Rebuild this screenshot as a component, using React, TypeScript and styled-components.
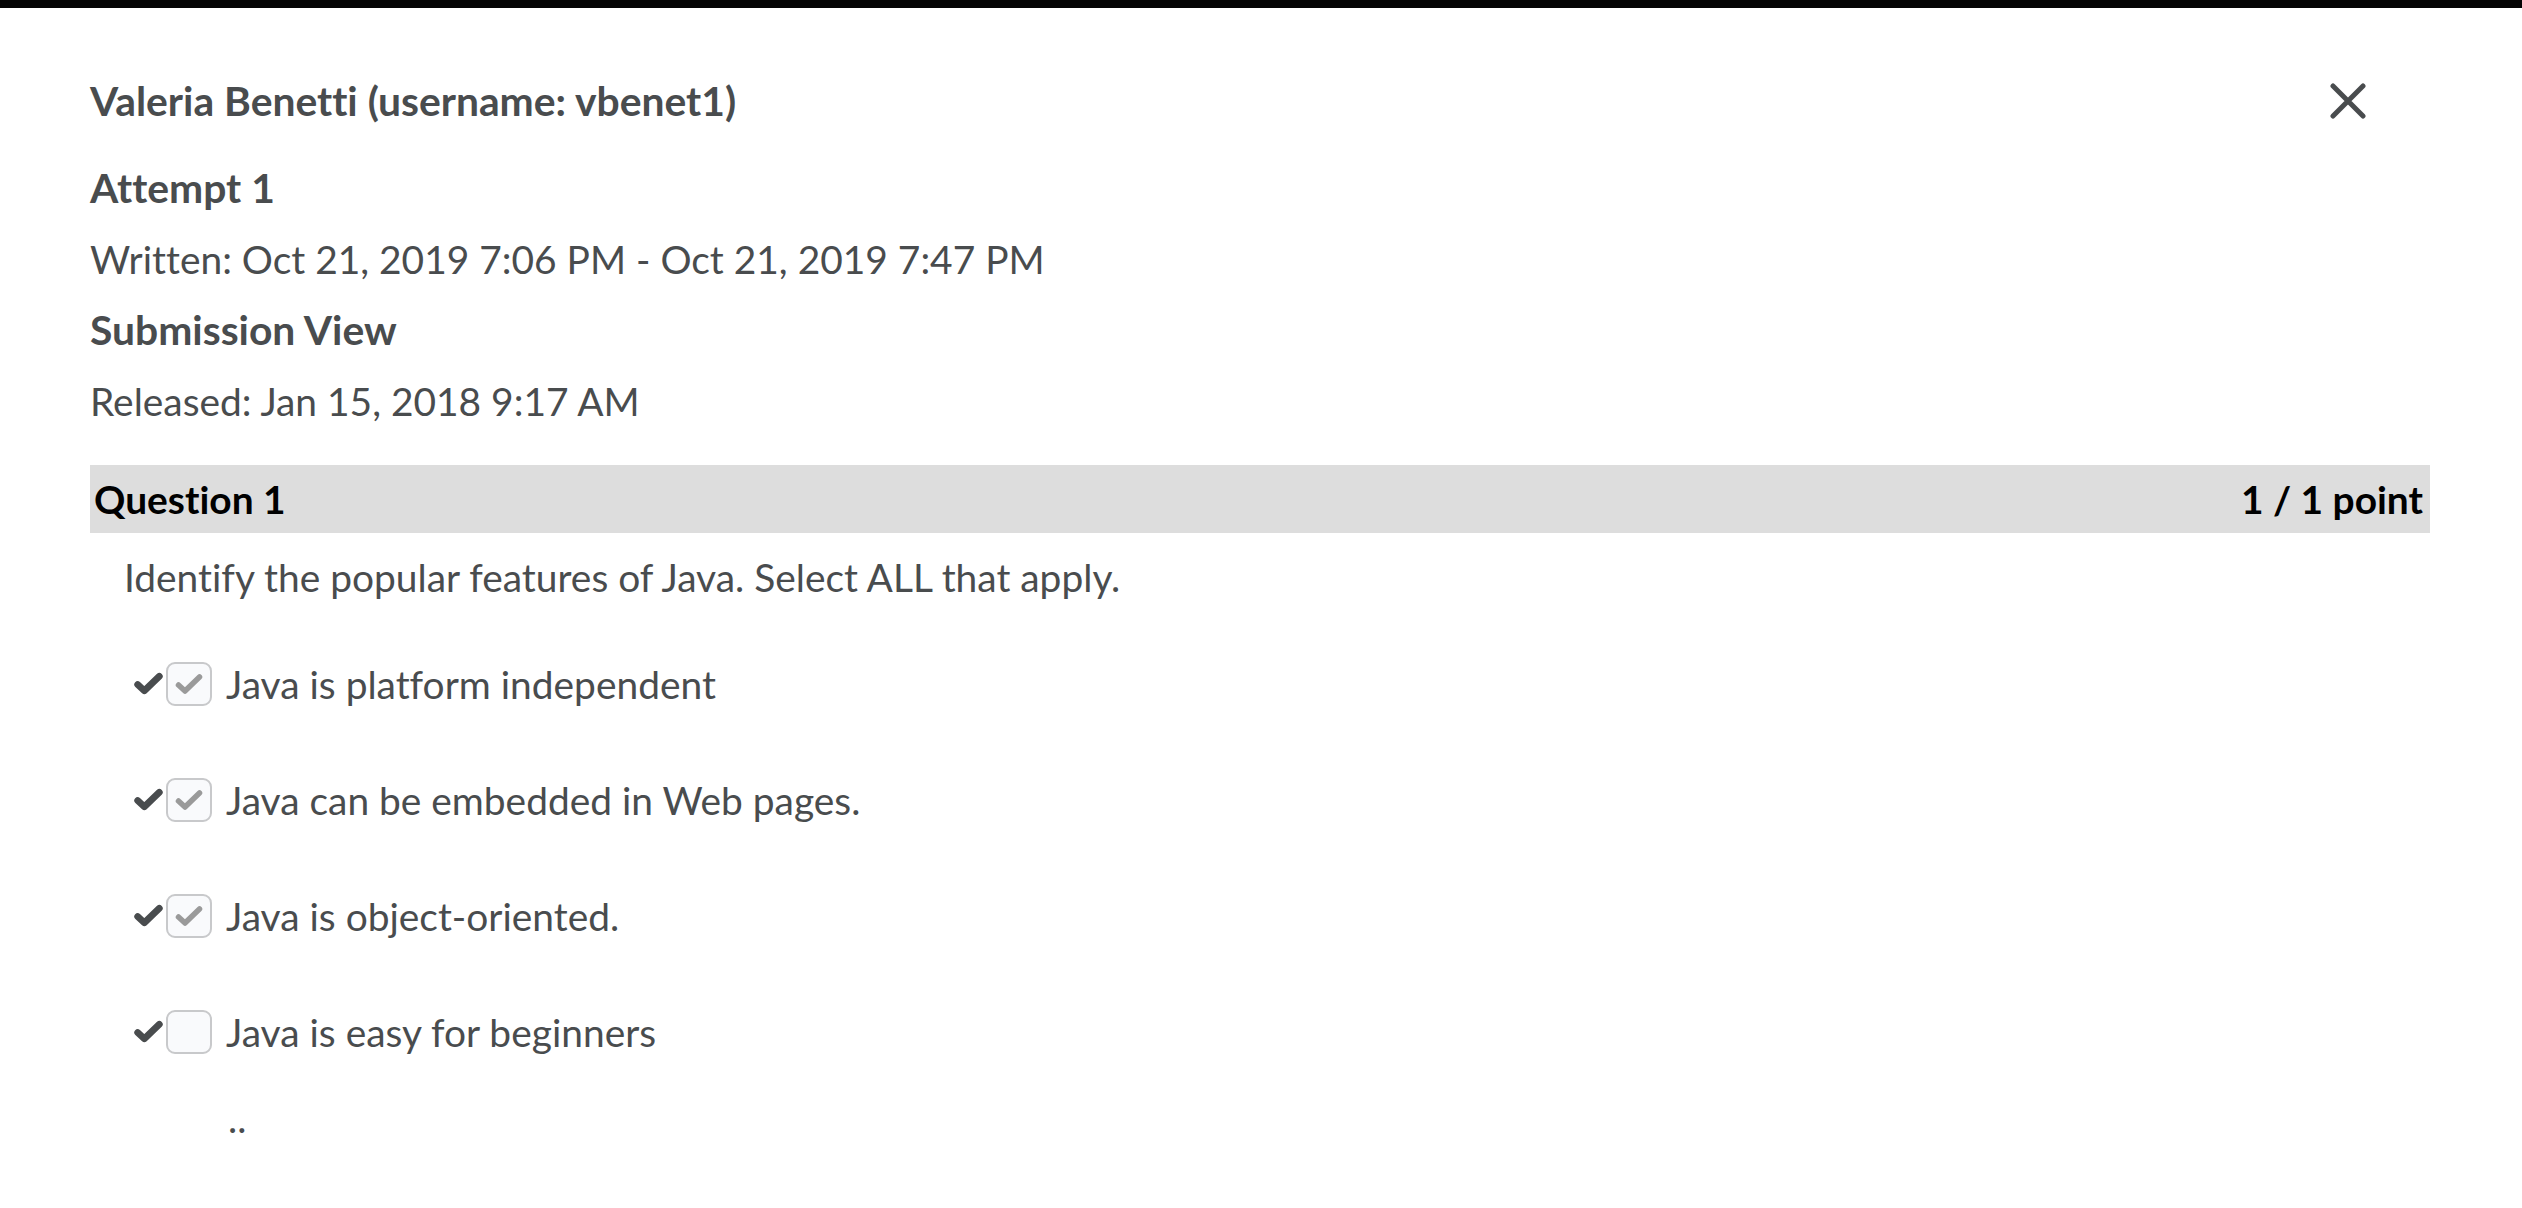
import React from "react";
import styled, { createGlobalStyle } from "styled-components";

const GlobalStyle = createGlobalStyle`
  html, body {
    margin: 0;
    padding: 0;
    background: #ffffff;
  }
  body {
    font-family: Lato, "Open Sans", "Liberation Sans", sans-serif;
    font-variant-ligatures: none;
    font-feature-settings: "liga" 0, "clig" 0;
    color: #494c4e;
  }
`;

const TopBar = styled.div`
  height: 8px;
  background: #050505;
`;

const Dialog = styled.div`
  padding: 65px 92px 40px 90px;
`;

const HeaderRow = styled.div`
  display: flex;
  align-items: center;
  justify-content: space-between;
`;

const Title = styled.h1`
  margin: 0;
  font-size: 40.8px;
  line-height: 56px;
  font-weight: 700;
  color: #494c4e;
`;

const CloseButton = styled.button`
  width: 40px;
  height: 40px;
  margin-right: 62px;
  padding: 0;
  border: none;
  background: transparent;
  display: flex;
  align-items: center;
  justify-content: center;
  color: #494c4e;
  cursor: pointer;
`;

const Heading = styled.h2<{ $gap: number }>`
  margin: ${(p) => p.$gap}px 0 0;
  font-size: 40.8px;
  line-height: 56px;
  font-weight: 700;
  color: #494c4e;
`;

const Meta = styled.div`
  margin-top: 15px;
  font-size: 38.9px;
  line-height: 56px;
  font-weight: 400;
`;

const QuestionBar = styled.div`
  margin-top: 36px;
  height: 68px;
  background: #dddddd;
  display: flex;
  align-items: center;
  justify-content: space-between;
  padding: 0 7px 0 4px;
  color: #000000;
  font-size: 38.9px;
  font-weight: 700;
`;

const Prompt = styled.div`
  margin: 16px 0 0 34px;
  font-size: 38.9px;
  line-height: 56px;
`;

const OptionList = styled.div`
  margin-top: 51px;
  padding-left: 43px;
  display: flex;
  flex-direction: column;
  gap: 60px;
`;

const OptionRow = styled.div`
  display: flex;
  align-items: center;
  height: 56px;
`;

const CorrectMark = styled.span`
  width: 31px;
  height: 26px;
  display: flex;
  color: #494c4e;
`;

const Box = styled.span`
  box-sizing: border-box;
  width: 46px;
  height: 44px;
  margin-left: 2px;
  border: 2px solid #c8c9cb;
  border-radius: 9px;
  background: #f9fafc;
  display: flex;
  align-items: center;
  justify-content: center;
  color: #9a9a9a;
`;

const Label = styled.span`
  margin-left: 14px;
  font-size: 38.9px;
  line-height: 56px;
`;

const Trailer = styled.div`
  margin: 30px 0 0 138px;
  font-size: 38.9px;
  line-height: 56px;
`;

const Check = ({ w, h, sw }: { w: number; h: number; sw: number }) => (
  <svg width={w} height={h} viewBox="0 0 30 24" fill="none">
    <path
      d="M4.5 13 L11 19 L25.5 5"
      stroke="currentColor"
      strokeWidth={sw}
      strokeLinecap="round"
      strokeLinejoin="round"
    />
  </svg>
);

const options = [
  { text: "Java is platform independent", checked: true },
  { text: "Java can be embedded in Web pages.", checked: true },
  { text: "Java is object-oriented.", checked: true },
  { text: "Java is easy for beginners", checked: false },
];

export default function App() {
  return (
    <>
      <GlobalStyle />
      <TopBar />
      <Dialog>
        <HeaderRow>
          <Title>Valeria Benetti (username: vbenet1)</Title>
          <CloseButton aria-label="Close">
            <svg width="36" height="36" viewBox="0 0 36 36" fill="none">
              <path
                d="M3 3 L33 33 M33 3 L3 33"
                stroke="currentColor"
                strokeWidth="5"
                strokeLinecap="round"
              />
            </svg>
          </CloseButton>
        </HeaderRow>
        <Heading $gap={31}>Attempt 1</Heading>
        <Meta>Written: Oct 21, 2019 7:06 PM - Oct 21, 2019 7:47 PM</Meta>
        <Heading $gap={15}>Submission View</Heading>
        <Meta>Released: Jan 15, 2018 9:17 AM</Meta>
        <QuestionBar>
          <span>Question 1</span>
          <span>1 / 1 point</span>
        </QuestionBar>
        <Prompt>Identify the popular features of Java. Select ALL that apply.</Prompt>
        <OptionList>
          {options.map((o) => (
            <OptionRow key={o.text}>
              <CorrectMark>
                <Check w={31} h={25} sw={6.5} />
              </CorrectMark>
              <Box>{o.checked && <Check w={30} h={24} sw={5.5} />}</Box>
              <Label>{o.text}</Label>
            </OptionRow>
          ))}
        </OptionList>
        <Trailer>..</Trailer>
      </Dialog>
    </>
  );
}
